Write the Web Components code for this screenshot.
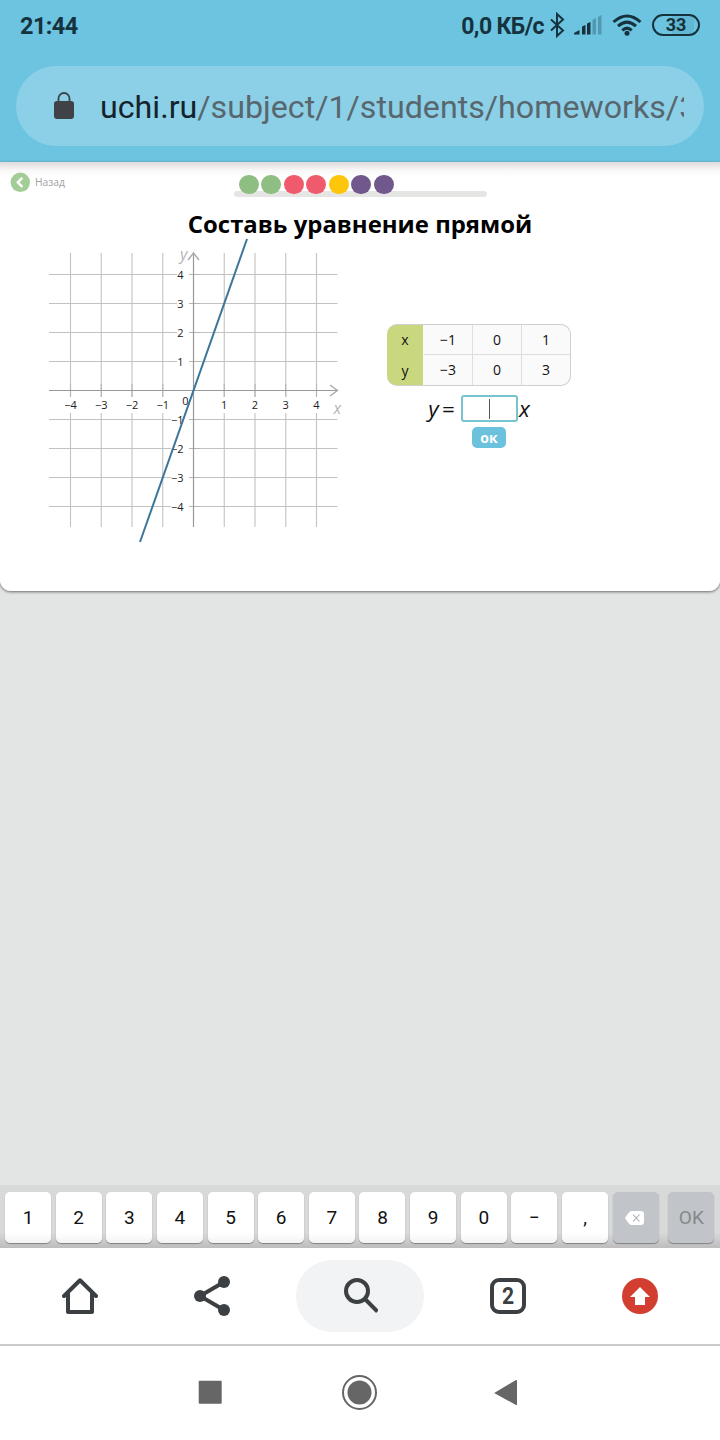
<!DOCTYPE html>
<html lang="ru">
<head>
<meta charset="utf-8">
<title>Составь уравнение прямой</title>
<style>
	body {
		margin: 0;
		width: 720px;
		height: 1440px;
		overflow: hidden;
		background: #e3e5e4;
		font-family: "Open Sans", "Noto Sans", sans-serif;
		color: #111;
	}
</style>
</head>
<body>
<phone-screen>
	<status-bar slot="top" time="21:44" speed="0,0 КБ/с" battery="33"></status-bar>
	<address-bar slot="top" host="uchi.ru" path="/subject/1/students/homeworks/3"></address-bar>
	<lesson-card heading="Составь уравнение прямой">
		<lesson-progress slot="progress" steps="green green red red yellow purple purple"></lesson-progress>
		<coordinate-plane slot="graph"></coordinate-plane>
		<value-table slot="answer" x="−1 0 1" y="−3 0 3"></value-table>
		<equation-input slot="answer"></equation-input>
	</lesson-card>
	<key-pad slot="bottom" keys="1 2 3 4 5 6 7 8 9 0 − ,"></key-pad>
	<browser-toolbar slot="bottom" tabs="2"></browser-toolbar>
	<system-nav slot="bottom"></system-nav>
</phone-screen>

<script>
const html = String.raw;

class BaseElement extends HTMLElement {
	connectedCallback() {
		if (this.shadowRoot) return;
		const template = document.createElement("template");
		template.innerHTML = this.render();
		this.attachShadow({ mode: "open" });
		this.shadowRoot.appendChild(template.content.cloneNode(true));
	}

	list(name) {
		return this.getAttribute(name).split(" ");
	}
}

customElements.define("phone-screen", class extends BaseElement {
	render() {
		return html`
			<style>
				:host { display: flex; flex-direction: column; height: 1440px; }
				main { flex: 1; min-height: 0; }
				header { background: #6dc4e1; height: 162px; }
			</style>
			<header><slot name="top"></slot></header>
			<main><slot></slot></main>
			<footer><slot name="bottom"></slot></footer>
		`;
	}
});

customElements.define("status-bar", class extends BaseElement {
	render() {
		return html`
			<style>
				:host {
					display: flex;
					align-items: center;
					box-sizing: border-box;
					height: 50px;
					padding: 0 20px;
					font: bold 23.5px/50px Roboto, sans-serif;
					color: #15323d;
				}
				span { padding-top: 2px; }
				.time { flex: 1; letter-spacing: -0.6px; }
				.speed { padding-top: 4px; font-size: 23px; letter-spacing: -0.6px; }
				svg { flex: none; display: block; }
				.bt { margin-left: 5px; }
				.signal { margin-left: 8px; }
				.wifi { margin-left: 9px; }
				.battery {
					box-sizing: border-box;
					width: 48px;
					height: 22px;
					margin-left: 10px;
					padding: 0;
					border: 2px solid currentColor;
					border-radius: 11px;
					font-size: 18px;
					line-height: 18px;
					text-align: center;
					background: linear-gradient(90deg, #6dc4e1 40%, #62b7d3 40% 92%, #6dc4e1 92%) content-box;
				}
			</style>
			<span class="time">${this.getAttribute("time")}</span>
			<span class="speed">${this.getAttribute("speed")}</span>
			<svg class="bt" width="16" height="26" fill="none" stroke="currentColor" stroke-width="2">
				<path d="M2 7.500 14 18.500 8 24V2l6 5.500L2 18.500"/>
			</svg>
			<svg class="signal" width="30" height="22" fill="currentColor">
				<path d="M1 20.500v-1.500l5.500-3v4.500zM9 20.500v-8l3.500-1.500v9.500zM14 20.500V9.500L17.500 8v12.500z"/>
				<path opacity=".3" d="M19.500 20.500V6L23 4v16.500zM25 20.500V3l3.500-2v19.500z"/>
			</svg>
			<svg class="wifi" width="30" height="24" fill="none" stroke="currentColor" stroke-width="3">
				<path d="M1.500 9Q15-3 28.500 9M6 13.200Q15 5 24 13.200M10.300 17.300Q15 13 19.700 17.300"/>
				<circle cx="15" cy="20.300" r="2.500" fill="currentColor" stroke="none"/>
			</svg>
			<span class="battery">${this.getAttribute("battery")}</span>
		`;
	}
});

customElements.define("address-bar", class extends BaseElement {
	render() {
		return html`
			<style>
				:host {
					display: flex;
					align-items: center;
					box-sizing: border-box;
					height: 80px;
					margin: 16px 16px 0;
					padding: 0 20px 0 37px;
					border-radius: 40px;
					background: #8bd0e7;
					font: 32.200px/80px Roboto, sans-serif;
					color: #59666e;
				}
				svg { flex: none; margin-right: 25px; }
				div { flex: 1; overflow: hidden; white-space: nowrap; padding-top: 1px; }
				b { font-weight: 400; color: #14232b; }
			</style>
			<svg width="22" height="28" fill="#3f4246">
				<rect x="1" y="9" width="20" height="18" rx="3"/>
				<path d="M5.500 10V6.500a5.500 5.500 0 0 1 11 0V10" fill="none" stroke="#3f4246" stroke-width="1.800"/>
			</svg>
			<div><b>${this.getAttribute("host")}</b><span>${this.getAttribute("path")}</span></div>
		`;
	}
});

customElements.define("lesson-card", class extends BaseElement {
	render() {
		return html`
			<style>
				:host {
					display: block;
					box-sizing: border-box;
					height: 429px;
					border-radius: 0 0 11px 11px;
					background: linear-gradient(#dcdddd, #e7e4e6 3px, #f8f7f8 8px, #fff 15px);
					box-shadow: 0 1px 3px rgba(0, 0, 0, .55);
				}
				nav { display: flex; height: 46px; }
				.back {
					display: flex;
					align-items: center;
					width: 223.500px;
					height: 20px;
					padding: 10px 0 0 10px;
					font: 10.300px/20px "Open Sans", sans-serif;
					color: #a2a2a2;
				}
				.back svg { margin-right: 5px; }
				h1 {
					margin: 0;
					font-size: 23.900px;
					line-height: 32px;
					text-align: center;
					color: #000;
				}
				.task { display: flex; margin-top: -2px; }
				.answer {
					display: flex;
					flex-direction: column;
					align-items: center;
					width: 184px;
					padding: 86px 0 0 37px;
				}
			</style>
			<nav>
				<div class="back">
					<svg width="20" height="20">
						<circle cx="10.300" cy="10.300" r="9.700" fill="#a3cd97"/>
						<path d="M12.300 5.800 7.800 10.300l4.500 4.500" fill="none" stroke="#fff" stroke-width="2.400"/>
					</svg>
					<span>Назад</span>
				</div>
				<slot name="progress"></slot>
			</nav>
			<h1>${this.getAttribute("heading")}</h1>
			<div class="task">
				<slot name="graph"></slot>
				<div class="answer"><slot name="answer"></slot></div>
			</div>
		`;
	}
});

customElements.define("lesson-progress", class extends BaseElement {
	render() {
		const dots = this.list("steps").map((step) => html`<i class="${step}"></i>`);
		return html`
			<style>
				:host {
					display: flex;
					gap: 2.700px;
					position: relative;
					box-sizing: border-box;
					width: 253px;
					height: 22.500px;
					margin-top: 12.500px;
					padding-left: 5.500px;
				}
				/* the track runs behind the dots */
				:host::before {
					content: "";
					position: absolute;
					inset: auto 0 0;
					height: 6px;
					border-radius: 3px;
					background: #e5e5e3;
				}
				i { position: relative; width: 19.800px; height: 19.800px; border-radius: 50%; }
				.green { background: #8fbe83; }
				.red { background: #ef5a6c; }
				.yellow { background: #fdc60d; }
				.purple { background: #70588d; }
			</style>
			${dots.join("")}
		`;
	}
});

const ORIGIN = { x: 193.5, y: 152.5 };
const STEP = { x: 30.75, y: 29 };

customElements.define("coordinate-plane", class extends BaseElement {
	// Grid lines are broken where the axis labels stand.
	render() {
		let grid = "";
		let ticks = "";
		let labels = "";
		for (const n of [-4, -3, -2, -1, 1, 2, 3, 4]) {
			const x = ORIGIN.x + n * STEP.x;
			const y = ORIGIN.y - n * STEP.y;
			const text = String(n).replace("-", "−");
			grid += `M${x} 15V159M${x} 175V289M49 ${y}H${n < 0 ? 171 : 177}M189 ${y}H337.5`;
			ticks += `M${x} 146V159M189 ${y}H200`;
			labels += html`<text x="${x}" y="171" text-anchor="middle">${text}</text>`;
			labels += html`<text x="183.500" y="${y + 4.3}" text-anchor="end">${text}</text>`;
		}
		return html`
			<style>
				:host { display: block; }
				svg { display: block; }
				text { font: 11px "Open Sans", sans-serif; fill: #222; }
				.axis { font: italic 16px "Open Sans", sans-serif; fill: #b5b5b5; }
				path { fill: none; }
			</style>
			<svg width="350" height="310">
				<path d="${grid}" stroke="#c2c2c2" stroke-width="1.100"/>
				<path d="${ticks}" stroke="#b5b5b5" stroke-width="1.100"/>
				<path d="M49 152.500H337M193.500 289V16" stroke="#999" stroke-width="1.200"/>
				<path d="M330 147l7.500 5.500-7.500 5.500M188 22l5.500-7 5.500 7" stroke="#aaa" stroke-width="1.400"/>
				${labels}
				<text x="188.500" y="167" text-anchor="end">0</text>
				<text class="axis" x="180" y="22">y</text>
				<text class="axis" x="333.500" y="176">x</text>
				<path d="M140 304 247 1" stroke="#3d759c" stroke-width="2"/>
			</svg>
		`;
	}
});

customElements.define("value-table", class extends BaseElement {
	render() {
		const row = (name) => html`
			<tr><th>${name}</th>${this.list(name).map((v) => `<td>${v}</td>`).join("")}</tr>
		`;
		return html`
			<style>
				:host {
					display: block;
					box-sizing: border-box;
					width: 184px;
					height: 62px;
					border: 1px solid #cfcfcf;
					border-left: 0;
					border-radius: 10px;
					overflow: hidden;
					background: linear-gradient(90deg, #c9d87f 36px, #fafafa 36px) border-box;
				}
				table { border-spacing: 0; table-layout: fixed; width: 183px; font-size: 14px; }
				tr { height: 30px; }
				th, td { box-sizing: border-box; padding: 0; line-height: 29px; text-align: center; font-weight: 400; }
				th { width: 36px; }
				td { border-left: 1px solid #dedede; }
				th + td { border-left-color: transparent; }
				tr:first-child th { padding-bottom: 1px; }
				tr:first-child td { border-bottom: 1px solid #dedede; }
				tr:last-child th { padding-top: 1px; }
				tr:last-child td { padding-bottom: 1px; }
			</style>
			<table>${row("x")}${row("y")}</table>
		`;
	}
});

customElements.define("equation-input", class extends BaseElement {
	render() {
		return html`
			<style>
				:host {
					display: flex;
					flex-direction: column;
					align-items: center;
					padding-top: 9px;
				}
				.equation {
					display: flex;
					align-items: center;
					height: 27px;
					font-size: 22.500px;
					line-height: 27px;
				}
				i { padding-bottom: 1px; }
				.equals { margin: 0 6px 0 3.500px; }
				.field {
					display: flex;
					justify-content: center;
					align-items: center;
					box-sizing: border-box;
					width: 57px;
					height: 27px;
					margin-right: 1px;
					border: 2px solid #78c3d2;
					border-radius: 3px;
					background: #fff;
				}
				.field::after { content: ""; width: 1px; height: 20px; background: #555; }
				button {
					width: 34px;
					height: 21px;
					margin: 5px 0 0 20px;
					padding: 0;
					border: 0;
					border-radius: 5px;
					background: #6cc1dd;
					color: #fff;
					font: bold 14px/21px "Open Sans", sans-serif;
				}
			</style>
			<div class="equation"><i>y</i><span class="equals">=</span><div class="field"></div><i>x</i></div>
			<button>ок</button>
		`;
	}
});

customElements.define("key-pad", class extends BaseElement {
	render() {
		const keys = this.list("keys").map((key) => html`<div class="key">${key}</div>`);
		return html`
			<style>
				:host {
					display: flex;
					gap: 4.650px;
					box-sizing: border-box;
					height: 63px;
					padding: 7px 5px 0;
					background: linear-gradient(#d8dad9 75%, #bdbdbd);
					font: 19px/51px Roboto, sans-serif;
				}
				.key {
					display: flex;
					justify-content: center;
					align-items: center;
					width: 46px;
					height: 51px;
					border-radius: 5px;
					background: linear-gradient(#fff 80%, #f3f3f3);
					box-shadow: 0 1px 1px rgba(0, 0, 0, .35);
				}
				.dim { background: #c1c4c9; color: #85888b; }
				.dim svg { margin-right: 3px; }
				.ok { margin-left: 5px; }
			</style>
			${keys.join("")}
			<div class="key dim">
				<svg width="19" height="14">
					<path d="M6 0h10a3 3 0 0 1 3 3v8a3 3 0 0 1-3 3H6Q4 13.500 0 7 4 .500 6 0z" fill="#fff"/>
					<path d="M8 3.500l6.500 7M14.500 3.500l-6.500 7" stroke="#a9abae" stroke-width="1.100"/>
				</svg>
			</div>
			<div class="key dim ok">OK</div>
		`;
	}
});

customElements.define("browser-toolbar", class extends BaseElement {
	render() {
		return html`
			<style>
				:host {
					display: grid;
					grid-template-columns: 132px 132px 164px 132px 132px;
					align-items: center;
					justify-items: center;
					box-sizing: border-box;
					height: 98px;
					padding: 0 14px;
					border-bottom: 2px solid #cbcbcb;
					background: #fff;
					color: #3c4043;
				}
				svg { display: block; fill: none; stroke: currentColor; }
				.search {
					display: grid;
					place-items: center;
					width: 128px;
					height: 72px;
					border-radius: 36px;
					background: #f1f3f4;
				}
				.tabs {
					box-sizing: border-box;
					width: 36px;
					height: 36px;
					border: 4px solid currentColor;
					border-radius: 9px;
					font: bold 24px/29px Roboto, sans-serif;
					text-align: center;
				}
				.tabs span { display: block; transform: scaleX(.88); }
			</style>
			<svg width="36" height="36" stroke-width="4" stroke-linejoin="round" stroke-linecap="round">
				<path d="M2 18 18 2.300l16 15.700"/>
				<path d="M6 15v19h24V15"/>
			</svg>
			<svg width="36" height="40">
				<path d="M30 6 6 20l24 14" stroke-width="4"/>
				<g fill="currentColor" stroke="none">
					<circle cx="30" cy="6" r="6"/><circle cx="6" cy="20" r="6"/><circle cx="30" cy="34" r="6"/>
				</g>
			</svg>
			<div class="search">
				<svg width="36" height="36" stroke-width="4">
					<circle cx="15" cy="13" r="11"/>
					<path d="M23 21l12.500 12.500"/>
				</svg>
			</div>
			<div class="tabs"><span>${this.getAttribute("tabs")}</span></div>
			<svg width="36" height="36">
				<circle cx="18" cy="18" r="18" fill="#d23f31" stroke="none"/>
				<path d="M18 9l10 10h-5v8h-10v-8H8z" fill="#fff" stroke="none"/>
			</svg>
		`;
	}
});

customElements.define("system-nav", class extends BaseElement {
	render() {
		return html`
			<style>
				:host {
					display: flex;
					justify-content: center;
					gap: 113px;
					height: 94px;
					align-items: center;
					background: #fff;
				}
				svg { display: block; fill: #666; }
			</style>
			<svg width="36" height="36"><rect x="5.700" y="5.800" width="23" height="23" rx="1"/></svg>
			<svg width="36" height="36">
				<circle cx="17.500" cy="17.500" r="16.500" fill="none" stroke="#666" stroke-width="2"/>
				<circle cx="17.500" cy="17.500" r="12"/>
			</svg>
			<svg width="36" height="36"><path d="M4 17.500 25 5q1-.500 1 1v23q0 1.500-1 1L4 18.500q-1-.500 0-1z"/></svg>
		`;
	}
});
</script>
</body>
</html>
